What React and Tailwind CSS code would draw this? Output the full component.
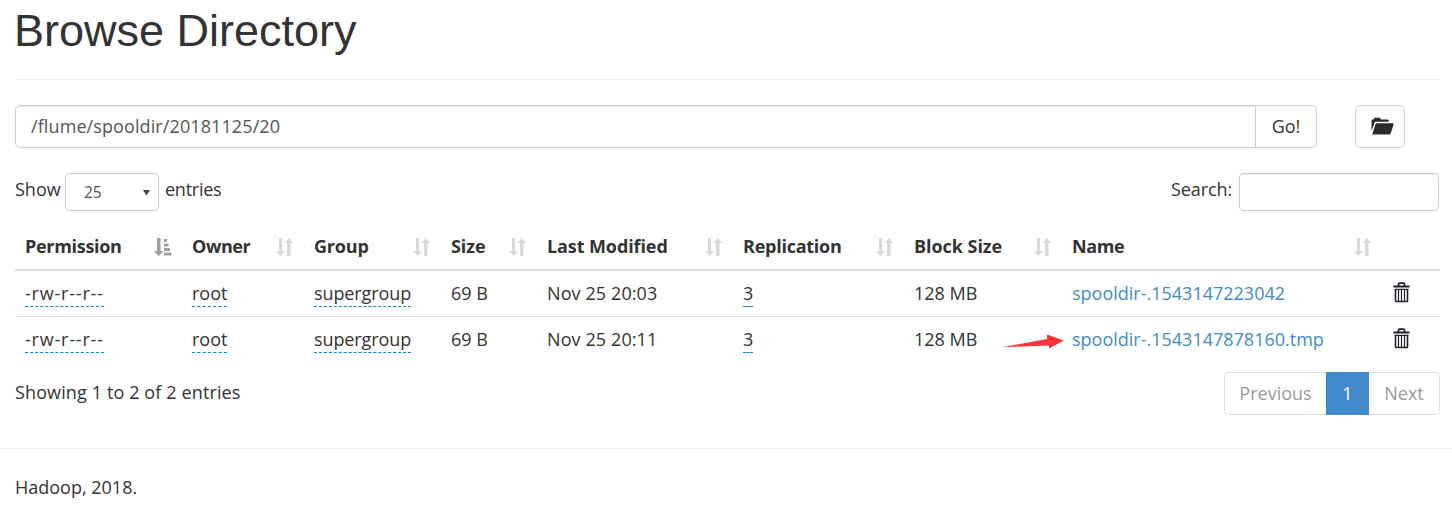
import React, { useState } from "react";
import clsx from "clsx";

const columns = [
  { label: "Permission", width: "w-[167px]", tracking: "tracking-[-0.3px]" },
  { label: "Owner", width: "w-[122px]", tracking: "tracking-[-0.4px]" },
  { label: "Group", width: "w-[137px]", tracking: "tracking-[-0.2px]" },
  { label: "Size", width: "w-[96px]", tracking: "tracking-[-0.1px]" },
  { label: "Last Modified", width: "w-[196px]", tracking: "tracking-[-0.1px]" },
  { label: "Replication", width: "w-[171px]", tracking: "tracking-[-0.25px]" },
  { label: "Block Size", width: "w-[158px]", tracking: "tracking-[-0.05px]" },
  { label: "Name", width: "w-[320px]", tracking: "tracking-[-0.4px]" },
];

const files = [
  {
    name: "spooldir-.1543147223042",
    permission: "-rw-r--r--",
    owner: "root",
    group: "supergroup",
    size: "69 B",
    modified: "Nov 25 20:03",
    replication: "3",
    blockSize: "128 MB",
  },
  {
    name: "spooldir-.1543147878160.tmp",
    permission: "-rw-r--r--",
    owner: "root",
    group: "supergroup",
    size: "69 B",
    modified: "Nov 25 20:11",
    replication: "3",
    blockSize: "128 MB",
    marked: true,
  },
];

const SortIcon = () => (
  <svg width="17" height="18" viewBox="0 0 17 18" fill="#d9d9d9">
    <path d="M3 0h3v13h3L4.500 18 0 13h3z" />
    <path d="M11 18h3.500V5H17L12.800 0 8.500 5H11z" />
  </svg>
);

const SortAscIcon = () => (
  <svg className="-mr-px" width="18" height="18" viewBox="0 0 18 18" fill="#a0a0a0">
    <path d="M3 0h3.500v13h3L4.700 18 0 13h3z" />
    <path d="M10 1h3v3h-3zM10 5.500h4.500v3H10zM10 10h6v3h-6zM10 14.500h7.500v3H10z" />
  </svg>
);

const FolderIcon = () => (
  <svg width="23" height="18" viewBox="0 0 23 18" fill="#2b2b2b">
    <path d="M0.500 14V3.500Q0.500 2.500 1.500 2.500H2.500L3.500 0.700H9L10 2.500H16.500Q17.800 2.500 17.800 3.800V4.800H5.200Q4 4.800 3.500 6z" />
    <path d="M5.700 6.200H22.200Q23 6.200 22.700 7L19.700 16.500Q19.400 17.500 18.400 17.500H1.200L4.500 7.200Q4.800 6.200 5.700 6.200z" />
  </svg>
);

const TrashIcon = () => (
  <svg width="17" height="21" viewBox="0 0 17 21" fill="none" stroke="#24202b">
    <path d="M0.500 4.500H16.500" strokeWidth="2" />
    <path d="M5.500 4V2.200Q5.500 1.200 6.500 1.200H10.500Q11.500 1.200 11.500 2.200V4" strokeWidth="1.800" />
    <path d="M2.500 7V18.800Q2.500 19.500 3.200 19.500H13.800Q14.500 19.500 14.500 18.800V7" strokeWidth="1.600" />
    <path d="M1.700 7.300H15.300M5.500 7V19M8.500 7V19M11.500 7V19" strokeWidth="1.200" />
  </svg>
);

const RedArrow = () => (
  <svg className="absolute left-[-70px] top-1.5" width="63" height="18" viewBox="0 0 63 18" fill="#f9353b">
    <path d="M0 14.200L45 6V1.500L62 7.500 47 15.500V12.500z" />
  </svg>
);

const Editable = ({ children, className }) => (
  <span className={clsx("inline-block h-[27px] border-b border-dashed border-b-[#0088cc]", className)}>{children}</span>
);

const App = () => {
  const [path, setPath] = useState("/flume/spooldir/20181125/20");
  const [search, setSearch] = useState("");

  return (
    <div className="h-[506px] overflow-hidden bg-white font-['Open_Sans','Noto_Sans',sans-serif] text-[18px] leading-[27px] text-[#333]">
      <div className="pl-[15px] pr-3">
        {/* Header */}
        <header className="h-20 border-b border-[#eee] pt-1.5">
          <h1 className="-ml-px font-['Liberation_Sans',Arial,sans-serif] text-[45px] leading-[50px]">Browse Directory</h1>
        </header>

        {/* Path bar */}
        <div className="mt-[25px] flex h-[43px]">
          <input
            className="w-[1241px] rounded-l-[5px] border border-[#ccc] px-[15px] tracking-[0.1px] text-[#555] shadow-[inset_0_1px_1px_rgba(0,0,0,0.075)] outline-none"
            value={path}
            onChange={(e) => setPath(e.target.value)}
          />
          <button className="w-[61px] rounded-r-[5px] border border-l-0 border-[#ccc]">Go!</button>
          <button className="ml-[38px] flex w-[50px] items-center justify-center rounded-[5px] border border-[#ccc] pb-0.5 pl-1">
            <FolderIcon />
          </button>
        </div>

        {/* Table controls */}
        <div className="mt-[25px] flex h-[38px] justify-between">
          <label className="flex">
            <span className="mt-[3px] w-[50px]">Show</span>
            <span className="flex w-[94px] items-center justify-between rounded-[4px] border border-[#ccc] pl-[18px] pr-2 text-[15.500px] text-[#555]">
              25
              <svg width="7" height="7" viewBox="0 0 8 7" fill="#444">
                <path d="M0 0.500h8L4 7z" />
              </svg>
            </span>
            <span className="ml-1.5 mt-[3px] tracking-[-0.25px]">entries</span>
          </label>
          <label className="flex">
            <span className="mt-[3px] w-[68px] tracking-[-0.1px]">Search:</span>
            <input
              className="mr-px w-[200px] rounded-[4px] border border-[#ccc] px-3 text-base shadow-[inset_0_1px_1px_rgba(0,0,0,0.075)] outline-none"
              value={search}
              onChange={(e) => setSearch(e.target.value)}
            />
          </label>
        </div>

        {/* Files */}
        <table className="mt-[11px] w-[1425px] table-fixed border-separate border-spacing-0 whitespace-nowrap text-left">
          <thead>
            <tr className="h-[49px]">
              {columns.map((c, i) => (
                <th key={c.label} className={clsx("border-b-2 border-[#ddd] p-0 pl-2.5 pt-0.5 font-bold", c.width)}>
                  <div className="flex items-center justify-between pr-[11px]">
                    <span className={c.tracking}>{c.label}</span>
                    {i === 0 ? <SortAscIcon /> : <SortIcon />}
                  </div>
                </th>
              ))}
              <th className="border-b-2 border-[#ddd] p-0" />
            </tr>
          </thead>
          <tbody>
            {files.map((f, i) => (
              <tr
                key={f.name}
                className={clsx(
                  "[&>td]:p-0 [&>td]:pl-2.5 [&>td]:pt-[9px] [&>td]:align-top",
                  i === 0 ? "h-[45px]" : "h-[46px] [&>td]:border-t [&>td]:border-[#ddd]"
                )}
              >
                <td><Editable className="tracking-[0.8px]">{f.permission}</Editable></td>
                <td><Editable>{f.owner}</Editable></td>
                <td><Editable className="tracking-[-0.1px]">{f.group}</Editable></td>
                <td>{f.size}</td>
                <td className="tracking-[0.1px]">{f.modified}</td>
                <td><Editable>{f.replication}</Editable></td>
                <td>{f.blockSize}</td>
                <td>
                  <a href="#" className="relative text-[#428bca]">
                    {f.name}
                    {f.marked && <RedArrow />}
                  </a>
                </td>
                <td><div className="pl-px pt-0.5"><TrashIcon /></div></td>
              </tr>
            ))}
          </tbody>
        </table>

        {/* Pagination */}
        <div className="mt-[10px] flex w-[1425px] justify-between">
          <span className="mt-[7px] tracking-[0.12px]">Showing 1 to 2 of 2 entries</span>
          <div className="flex h-[43px] text-[#999]">
            <button className="w-[102px] rounded-l-[5px] border border-r-0 border-[#ddd]">Previous</button>
            <button className="w-[43px] bg-[#428bca] text-white">1</button>
            <button className="w-[71px] rounded-r-[5px] border border-l-0 border-[#ddd]">Next</button>
          </div>
        </div>
      </div>

      <footer className="mt-[33px] border-t border-[#eee] pl-[15px] pt-[25px]">Hadoop, 2018.</footer>
    </div>
  );
};

export default App;
